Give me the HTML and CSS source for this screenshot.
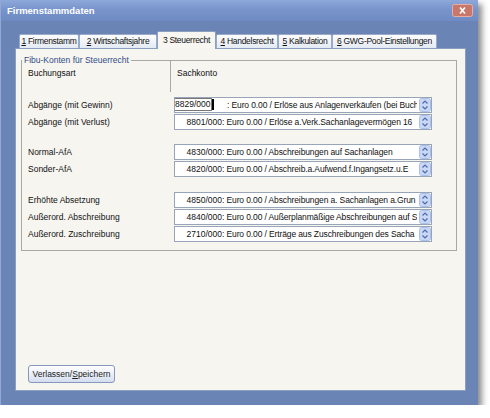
FILE: index.html
```html
<!DOCTYPE html>
<html lang="de">
<head>
    <meta charset="UTF-8">
    <title>Firmenstammdaten</title>
    <link rel="stylesheet" href="styles.css">
</head>
<body>
    <div class="window">
        <div class="titlebar">
            <span class="title">Firmenstammdaten</span>
            <span class="close">
                <svg width="21" height="13" viewBox="0 0 21 13">
                    <rect x="0.5" y="0.5" width="20" height="12" rx="2" fill="#c9776b" stroke="#e4b0a6"/>
                    <path d="M8 3.5 L13 9.5 M13 3.5 L8 9.5" stroke="#fff" stroke-width="1.6"/>
                </svg>
            </span>
        </div>
        <div class="frame">
            <div class="tabs">
                <div class="tab t1"><u>1</u> Firmenstamm</div>
                <div class="tab t2"><u>2</u> Wirtschaftsjahre</div>
                <div class="tab t3 active">3 Steuerrecht</div>
                <div class="tab t4"><u>4</u> Handelsrecht</div>
                <div class="tab t5"><u>5</u> Kalkulation</div>
                <div class="tab t6"><u>6</u> GWG-Pool-Einstellungen</div>
            </div>
            <div class="panel">
                <fieldset class="group">
                    <legend>Fibu-Konten für Steuerrecht</legend>
                    <div class="head">
                        <div class="col-a">Buchungsart</div>
                        <div class="col-b">Sachkonto</div>
                    </div>

                    <div class="block first">
                        <div class="row">
                            <div class="label">Abgänge (mit Gewinn)</div>
                            <div class="combo">
                                <span class="num edit"><span class="editbox">8829/000</span><span class="caret"></span></span>
                                <span class="desc">: Euro 0.00 / Erlöse aus Anlagenverkäufen (bei Buch</span>
                                <svg class="spin" width="12" height="14" viewBox="0 0 12 14"><rect x="0.5" y="0.5" width="11" height="13" rx="2" fill="#c8d7f6" stroke="#aac0ea"/><path d="M3.5 5.5 L6 3 L8.5 5.5 M3.5 8.5 L6 11 L8.5 8.5" fill="none" stroke="#4f6ca8" stroke-width="1.2"/></svg>
                            </div>
                        </div>
                        <div class="row">
                            <div class="label">Abgänge (mit Verlust)</div>
                            <div class="combo">
                                <span class="num">8801/000</span>
                                <span class="desc">: Euro 0.00 / Erlöse a.Verk.Sachanlagevermögen 16</span>
                                <svg class="spin" width="12" height="14" viewBox="0 0 12 14"><rect x="0.5" y="0.5" width="11" height="13" rx="2" fill="#c8d7f6" stroke="#aac0ea"/><path d="M3.5 5.5 L6 3 L8.5 5.5 M3.5 8.5 L6 11 L8.5 8.5" fill="none" stroke="#4f6ca8" stroke-width="1.2"/></svg>
                            </div>
                        </div>
                    </div>

                    <div class="block">
                        <div class="row">
                            <div class="label">Normal-AfA</div>
                            <div class="combo">
                                <span class="num">4830/000</span>
                                <span class="desc">: Euro 0.00 / Abschreibungen auf Sachanlagen</span>
                                <svg class="spin" width="12" height="14" viewBox="0 0 12 14"><rect x="0.5" y="0.5" width="11" height="13" rx="2" fill="#c8d7f6" stroke="#aac0ea"/><path d="M3.5 5.5 L6 3 L8.5 5.5 M3.5 8.5 L6 11 L8.5 8.5" fill="none" stroke="#4f6ca8" stroke-width="1.2"/></svg>
                            </div>
                        </div>
                        <div class="row">
                            <div class="label">Sonder-AfA</div>
                            <div class="combo">
                                <span class="num">4820/000</span>
                                <span class="desc">: Euro 0.00 / Abschreib.a.Aufwend.f.Ingangsetz.u.E</span>
                                <svg class="spin" width="12" height="14" viewBox="0 0 12 14"><rect x="0.5" y="0.5" width="11" height="13" rx="2" fill="#c8d7f6" stroke="#aac0ea"/><path d="M3.5 5.5 L6 3 L8.5 5.5 M3.5 8.5 L6 11 L8.5 8.5" fill="none" stroke="#4f6ca8" stroke-width="1.2"/></svg>
                            </div>
                        </div>
                    </div>

                    <div class="block third">
                        <div class="row">
                            <div class="label">Erhöhte Absetzung</div>
                            <div class="combo">
                                <span class="num">4850/000</span>
                                <span class="desc">: Euro 0.00 / Abschreibungen a. Sachanlagen a.Grun</span>
                                <svg class="spin" width="12" height="14" viewBox="0 0 12 14"><rect x="0.5" y="0.5" width="11" height="13" rx="2" fill="#c8d7f6" stroke="#aac0ea"/><path d="M3.5 5.5 L6 3 L8.5 5.5 M3.5 8.5 L6 11 L8.5 8.5" fill="none" stroke="#4f6ca8" stroke-width="1.2"/></svg>
                            </div>
                        </div>
                        <div class="row">
                            <div class="label">Außerord. Abschreibung</div>
                            <div class="combo">
                                <span class="num">4840/000</span>
                                <span class="desc">: Euro 0.00 / Außerplanmäßige Abschreibungen auf S</span>
                                <svg class="spin" width="12" height="14" viewBox="0 0 12 14"><rect x="0.5" y="0.5" width="11" height="13" rx="2" fill="#c8d7f6" stroke="#aac0ea"/><path d="M3.5 5.5 L6 3 L8.5 5.5 M3.5 8.5 L6 11 L8.5 8.5" fill="none" stroke="#4f6ca8" stroke-width="1.2"/></svg>
                            </div>
                        </div>
                        <div class="row">
                            <div class="label">Außerord. Zuschreibung</div>
                            <div class="combo">
                                <span class="num">2710/000</span>
                                <span class="desc">: Euro 0.00 / Erträge aus Zuschreibungen des Sacha</span>
                                <svg class="spin" width="12" height="14" viewBox="0 0 12 14"><rect x="0.5" y="0.5" width="11" height="13" rx="2" fill="#c8d7f6" stroke="#aac0ea"/><path d="M3.5 5.5 L6 3 L8.5 5.5 M3.5 8.5 L6 11 L8.5 8.5" fill="none" stroke="#4f6ca8" stroke-width="1.2"/></svg>
                            </div>
                        </div>
                    </div>
                </fieldset>

                <div class="footer">
                    <button class="btn">Verlassen/<u>S</u>peichern</button>
                </div>
            </div>
        </div>
    </div>
</body>
</html>
```

FILE: styles.css
```css
body{
    margin: 0;
    background: #fff;
    font-family: "Liberation Sans", Arial, sans-serif;
    font-size: 8.5px;
    color: #111;
}
.window{
    display: flex;
    flex-direction: column;
    width: 478px;
    height: 405px;
    box-sizing: border-box;
    background: #6a84b6;
    border-left: 1px solid #93a9d4;
    box-shadow: 4px 4px 6px rgba(0, 0, 0, 0.45);
}
.titlebar{
    display: flex;
    align-items: center;
    justify-content: space-between;
    height: 21px;
    padding: 0 5px 0 6px;
    background: linear-gradient(#8ea8da, #7894cb 45%, #6f8bc3);
    color: #fff;
}
.title{
    font-size: 9.5px;
    font-weight: bold;
}
.close{
    display: flex;
    margin-top: -1px;
}
.frame{
    display: flex;
    flex-direction: column;
    flex: 1;
    padding: 10px 12px 14px 14px;
}

/* TAB LEISTE */
.tabs{
    display: flex;
    align-items: flex-end;
    height: 17px;
    padding-left: 4px;
}
.tab{
    height: 14px;
    box-sizing: border-box;
    border: 1px solid #9aabc8;
    border-bottom: none;
    border-radius: 2px 2px 0 0;
    background: linear-gradient(#fdfdfe, #e4eaf3);
    line-height: 13px;
    letter-spacing: -0.3px;
    text-align: center;
    white-space: nowrap;
    overflow: hidden;
}
.tab.active{
    position: relative;
    z-index: 1;
    height: 18px;
    margin-bottom: -1px;
    background: #f7f6f1;
    border-color: #8d9fbf;
    line-height: 16px;
}
.t1{ width: 60px; }
.t2{ width: 78px; }
.t3{ width: 59px; }
.t4{ width: 62px; }
.t5{ width: 54px; }
.t6{ width: 105px; }

.panel{
    display: flex;
    flex-direction: column;
    flex: 1;
    border: 1px solid #8d9fbf;
    background: #f6f5f0;
    padding: 5px 8px 7px 5px;
}

/* GRUPPE */
.group{
    margin: 0;
    padding: 0 0 8px 0;
    border: 1px solid #a9a9a4;
}
.group legend{
    padding: 0 2px;
    line-height: 12px;
    color: #2f4c86;
}
.head{
    display: flex;
    margin-top: -6px;
    height: 32px;
}
.col-a{
    width: 142px;
    padding: 8px 0 0 6px;
    border-right: 1px solid #a9a9a4;
}
.col-b{
    padding: 8px 0 0 6px;
}
.block{
    margin-top: 13px;
}
.block.first{
    margin-top: 4px;
}
.block.third{
    margin-top: 14px;
}
.row{
    display: flex;
    align-items: center;
    height: 17px;
}
.label{
    width: 146px;
    padding-left: 6px;
}
.combo{
    display: flex;
    align-items: center;
    width: 258px;
    height: 16px;
    box-sizing: border-box;
    border: 1px solid #98a4b8;
    background: #fff;
    white-space: nowrap;
    overflow: hidden;
}
.num{
    flex: none;
    width: 47px;
    text-align: right;
}
.num.edit{
    display: flex;
    align-items: center;
    width: 52px;
    text-align: left;
}
.editbox{
    border: 1px solid #777;
    border-left: none;
    padding: 0 1px 0 0;
    line-height: 11px;
}
.caret{
    width: 2px;
    height: 11px;
    background: #000;
}
.desc{
    flex: 1;
    overflow: hidden;
    white-space: pre;
    letter-spacing: -0.12px;
}
.spin{
    flex: none;
    margin-left: 2px;
}

/* UNTEN */
.footer{
    margin-top: auto;
}
.btn{
    width: 87px;
    height: 18px;
    margin-left: 7px;
    padding: 0;
    border: 1px solid #8697bd;
    border-radius: 3px;
    background: linear-gradient(#fefefe, #e9eef7 55%, #d4def0);
    font-family: "Liberation Sans", Arial, sans-serif;
    font-size: 8.5px;
    color: #222;
}
```
